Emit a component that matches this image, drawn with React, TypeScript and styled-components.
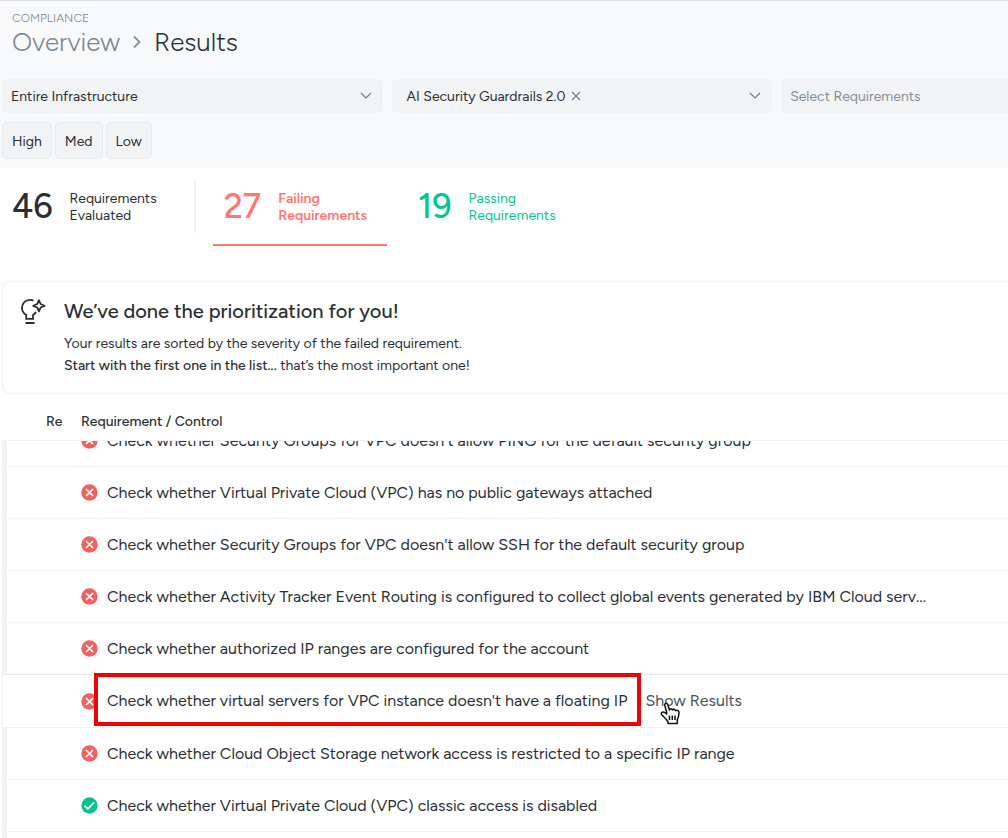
import React from "react";
import styled, { createGlobalStyle, css } from "styled-components";

const ink = "#2b2f33";
const muted = "#878f98";
const red = "#ff7673";
const green = "#05c48f";
const line = "#eff0f2";

const GlobalStyle = createGlobalStyle`
  *, *::before, *::after { box-sizing: border-box; }
  body {
    margin: 0;
    background: #fff;
    color: ${ink};
    font-family: Figtree, Lato, "Liberation Sans", sans-serif;
    font-size: 14px;
    overflow: hidden;
  }
  button, select { font: inherit; color: inherit; }
`;

const Page = styled.div`
  display: flex;
  flex-direction: column;
  min-height: 100vh;
`;

const TopArea = styled.header`
  border-top: 1px solid #dfe1e4;
  background: #f8f9fb;
  padding: 9px 0 9px 2px;
`;

const Eyebrow = styled.p`
  margin: 0;
  padding-left: 10px;
  font-size: 12px;
  line-height: 16px;
  font-weight: 300;
  color: #7b848d;
`;

const Breadcrumb = styled.nav`
  display: flex;
  align-items: center;
  gap: 12px;
  padding-left: 10px;
  font-size: 26px;
  line-height: 32px;
  font-weight: 300;

  a { color: #7b848d; text-decoration: none; }
  h1 { margin: 0; font-size: inherit; font-weight: inherit; }
`;

const Filters = styled.div`
  display: grid;
  grid-template-columns: 52fr 52fr 31fr;
  gap: 9px;
  margin-top: 21px;
`;

const Field = styled.div<{ $open?: boolean }>`
  display: flex;
  align-items: center;
  height: 34px;
  padding: 0 11px 0 9px;
  background: #f1f3f5;
  border-radius: ${(p) => (p.$open ? "5px 0 0 5px" : "5px")};
`;

const Select = styled.select<{ $placeholder?: boolean }>`
  flex: 1;
  min-width: 0;
  height: 100%;
  padding: 0;
  border: 0;
  background: none;
  appearance: none;
  outline: none;
  color: ${(p) => (p.$placeholder ? muted : ink)};
`;

const Chip = styled.span`
  display: flex;
  align-items: center;
  gap: 6px;
  padding-left: 6px;
`;

const ChipRemove = styled.button`
  display: flex;
  padding: 0;
  border: 0;
  background: none;
  color: #747d86;
`;

const Severities = styled.div`
  display: flex;
  gap: 3px;
  margin-top: 9px;
`;

const SeverityButton = styled.button`
  height: 37px;
  padding: 2px 9px 0;
  border: 1px solid #e7e9eb;
  border-radius: 5px;
  background: #f1f3f5;
`;

const Stats = styled.section`
  display: flex;
  align-items: flex-start;
  padding: 13px 0 0 2px;
`;

const Stat = styled.div<{ $tone?: string; $active?: boolean }>`
  display: flex;
  align-items: center;
  gap: 17px;
  height: 65px;
  padding: 0 20px 12px 11px;
  color: ${(p) => p.$tone ?? ink};
`;

const Total = styled(Stat)`
  height: 52px;
  margin-right: 17px;
  padding: 0 37px 1px 10px;
  border-right: 2px solid ${line};
`;

const TabButton = styled(Stat).attrs({ as: "button" })`
  border-width: 0 0 2px;
  border-style: solid;
  border-color: ${(p) => (p.$active ? red : "transparent")};
  background: none;
  text-align: left;
  margin-right: 20px;
`;

const Count = styled.span`
  font-size: 34px;
  line-height: 44px;
  font-weight: 500;
`;

const CountLabel = styled.span<{ $bold?: boolean }>`
  font-size: 14px;
  line-height: 17px;
  font-weight: ${(p) => (p.$bold ? 600 : 400)};
`;

const Notice = styled.section`
  display: flex;
  gap: 18px;
  margin: 35px 0 0 2px;
  padding: 15px 17px 16px;
  border: 1px solid ${line};
  border-right: 0;
  border-radius: 8px 0 0 8px;

  > svg { margin-top: 1px; }
  h2 { margin: 0 0 8px; font-size: 20px; line-height: 28px; font-weight: 500; }
  p { margin: 0; line-height: 22px; }
  strong { font-weight: 500; }
`;

const Table = styled.table`
  width: 100%;
  border-collapse: separate;
  border-spacing: 0;
  table-layout: fixed;
  margin-top: 11px;
  padding-left: 2px;
`;

const HeadCell = styled.th<{ $width?: number }>`
  ${(p) => p.$width && `width: ${p.$width}px;`}
  height: 36px;
  padding: 0 0 2px;
  text-align: left;
  font-weight: 500;
  border-bottom: 1px solid ${line};
  &:first-child { padding-left: 44px; }
`;

const Row = styled.tr<{ $hovered?: boolean }>`
  td {
    padding: 0;
    border-bottom: 1px solid ${line};
    font-size: 16px;
    line-height: 24px;
  }
  td:first-child { border-left: 5px solid #f0f2f4; }
  ${(p) => p.$hovered && css`
    td { box-shadow: 0 -1px 0 #e3e7eb; }
    td:first-child { border-left: 1px solid ${line}; }
  `}
`;

const Control = styled.div<{ $clipped?: boolean; $hovered?: boolean }>`
  display: flex;
  align-items: ${(p) => (p.$clipped ? "flex-end" : "center")};
  height: ${(p) => (p.$clipped ? 25 : p.$hovered ? 52 : 51)}px;
  padding-bottom: ${(p) => (p.$clipped ? 13 : 0)}px;
  overflow: ${(p) => (p.$clipped ? "hidden" : "visible")};
  white-space: nowrap;

  > svg { flex: none; margin: 4px 9px 4px 0; }
`;

const Marked = styled.span`
  position: relative;
  margin-right: 18px;

  &::after {
    content: "";
    position: absolute;
    inset: -16px -14px -13px -13px;
    border: 4px solid #e90405;
  }
`;

const ShowResults = styled.a`
  position: relative;
  color: #4b5158;
  text-decoration: none;
`;

const Pointer = styled.svg`
  position: absolute;
  left: 15px;
  top: 13px;
`;

const Remainder = styled.div`
  flex: 1;
  margin-left: 2px;
  border-left: 5px solid #f0f2f4;
`;

const Chevron = () => (
  <svg width="12" height="8" viewBox="0 0 12 8" fill="none" stroke="#747d86" strokeWidth="1.2" aria-hidden="true">
    <path d="M1 1l5 5 5-5" />
  </svg>
);

const StatusIcon = ({ passed }: { passed?: boolean }) => (
  <svg width="17" height="17" viewBox="0 0 17 17" fill="none" stroke="#fff" strokeWidth="1.7" role="img" aria-label={passed ? "Passed" : "Failed"}>
    <circle cx="8.5" cy="8.5" r="8.2" fill={passed ? green : "#f0625f"} stroke="none" />
    {passed ? <path d="M3.5 8.6l3.3 3.2 6.4-6.5" /> : <path d="M5 5l7 7M12 5l-7 7" />}
  </svg>
);

const BulbIcon = () => (
  <svg width="26" height="28" viewBox="0 0 26 28" fill="none" stroke={ink} strokeWidth="1.8" aria-hidden="true">
    <path d="M13.500 2.600C12.400 2.100 11.200 1.900 10 1.900C5.500 1.900 2 5.300 2 9.900C2 13 3.700 15.400 6.200 17V20.800H13V17C14.300 16.300 15.300 15.300 16 14M5.500 25H14.500" />
    <path d="M19 2.200L20.600 6L24.600 7.800L20.600 9.500L19 13.400L17.200 9.500L13.200 7.800L17.200 6Z" strokeLinejoin="round" />
  </svg>
);

const controls: { text: string; passed?: boolean; clipped?: boolean; hovered?: boolean }[] = [
  { text: "Check whether Security Groups for VPC doesn't allow PING for the default security group", clipped: true },
  { text: "Check whether Virtual Private Cloud (VPC) has no public gateways attached" },
  { text: "Check whether Security Groups for VPC doesn't allow SSH for the default security group" },
  { text: "Check whether Activity Tracker Event Routing is configured to collect global events generated by IBM Cloud serv..." },
  { text: "Check whether authorized IP ranges are configured for the account" },
  { text: "Check whether virtual servers for VPC instance doesn't have a floating IP", hovered: true },
  { text: "Check whether Cloud Object Storage network access is restricted to a specific IP range" },
  { text: "Check whether Virtual Private Cloud (VPC) classic access is disabled", passed: true },
];

export default function App() {
  return (
    <>
      <GlobalStyle />
      <Page>
        <TopArea>
          <Eyebrow>COMPLIANCE</Eyebrow>
          <Breadcrumb aria-label="Breadcrumb">
            <a href="#overview">Overview</a>
            <svg width="10" height="14" viewBox="0 0 10 14" fill="none" stroke={muted} strokeWidth="1.8" aria-hidden="true">
              <path d="M2 1.500l5.500 5.500L2 12.500" />
            </svg>
            <h1>Results</h1>
          </Breadcrumb>
          <Filters>
            <Field>
              <Select aria-label="Scope"><option>Entire Infrastructure</option></Select>
              <Chevron />
            </Field>
            <Field>
              <Chip>
                AI Security Guardrails 2.0
                <ChipRemove aria-label="Remove AI Security Guardrails 2.0">
                  <svg width="10" height="10" viewBox="0 0 10 10" stroke="currentColor" strokeWidth="1.1">
                    <path d="M1 1l8 8M9 1l-8 8" />
                  </svg>
                </ChipRemove>
              </Chip>
              <Select aria-label="Policies"><option></option></Select>
              <Chevron />
            </Field>
            <Field $open>
              <Select aria-label="Requirements" $placeholder><option>Select Requirements</option></Select>
            </Field>
          </Filters>
          <Severities>
            <SeverityButton>High</SeverityButton>
            <SeverityButton>Med</SeverityButton>
            <SeverityButton>Low</SeverityButton>
          </Severities>
        </TopArea>

        <Stats>
          <Total>
            <Count>46</Count>
            <CountLabel>Requirements<br />Evaluated</CountLabel>
          </Total>
          <TabButton $tone={red} $active>
            <Count>27</Count>
            <CountLabel $bold>Failing<br />Requirements</CountLabel>
          </TabButton>
          <TabButton $tone={green}>
            <Count>19</Count>
            <CountLabel>Passing<br />Requirements</CountLabel>
          </TabButton>
        </Stats>

        <Notice>
          <BulbIcon />
          <div>
            <h2>We’ve done the prioritization for you!</h2>
            <p>Your results are sorted by the severity of the failed requirement.</p>
            <p><strong>Start with the first one in the list...</strong> that’s the most important one!</p>
          </div>
        </Notice>

        <Table>
          <thead>
            <tr>
              <HeadCell $width={79}>Re</HeadCell>
              <HeadCell>Requirement / Control</HeadCell>
            </tr>
          </thead>
          <tbody>
            {controls.map((c) => (
              <Row key={c.text} $hovered={c.hovered}>
                <td />
                <td>
                  <Control $clipped={c.clipped} $hovered={c.hovered}>
                    <StatusIcon passed={c.passed} />
                    {c.hovered ? <Marked>{c.text}</Marked> : c.text}
                    {c.hovered && (
                      <ShowResults href="#results">
                        Show Results
                        <Pointer width="21" height="23" viewBox="0 0 21 23" fill="#fff" stroke="#111" strokeWidth="1.5" strokeLinejoin="round" aria-hidden="true">
                          <path d="M7 11.500L4.800 3.500C4.300 1.200 7 .5 7.700 2.600L9.500 8C10 6.300 12 6.500 12.400 8C13.200 6.800 15 7.200 15.300 8.700C16.500 7.800 19 8.300 19 10.500C19 14.500 18 16 17.300 17.500V21.500H8V19.500C6 17 4.500 15.500 2 13C.300 11 2.800 9 4.700 10.500L7 12.500" />
                          <path d="M9.500 13.500v4.500M12.300 13.500v4.500M15 13.500v4.500" />
                        </Pointer>
                      </ShowResults>
                    )}
                  </Control>
                </td>
              </Row>
            ))}
          </tbody>
        </Table>
        <Remainder />
      </Page>
    </>
  );
}
